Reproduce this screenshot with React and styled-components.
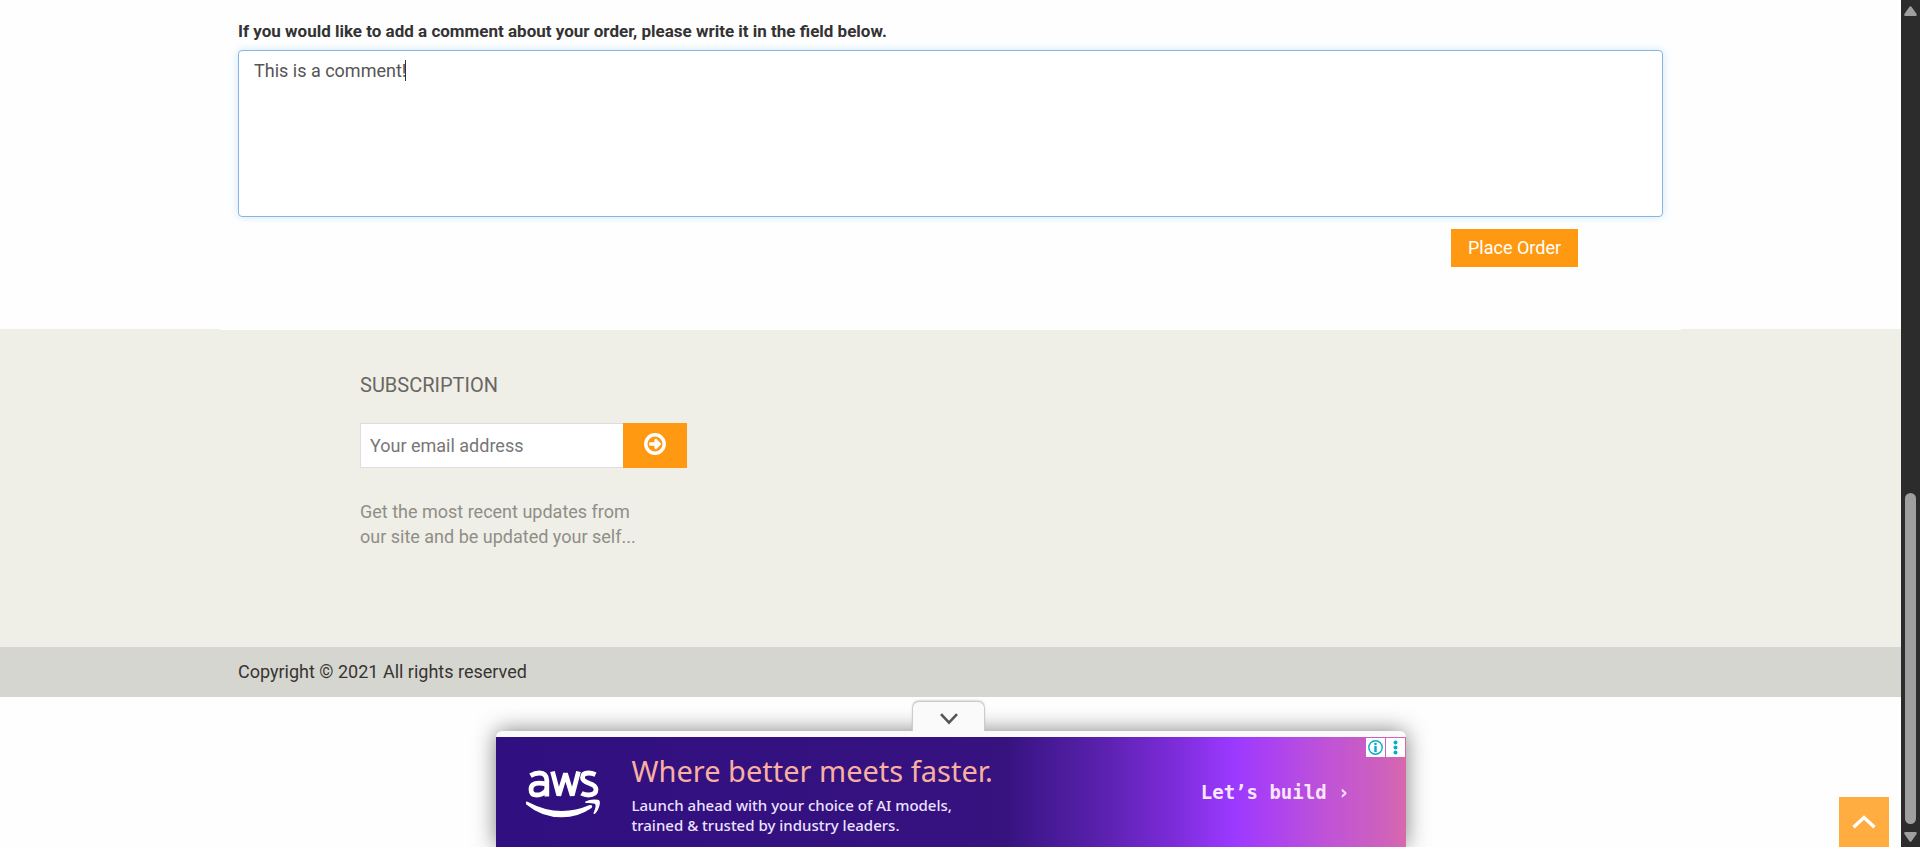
import React from "react";
import styled, { createGlobalStyle } from "styled-components";

const GlobalStyle = createGlobalStyle`
  *, *::before, *::after { box-sizing: border-box; }
  body {
    margin: 0;
    background: #fefefe;
    font-family: Roboto, "Liberation Sans", sans-serif;
    font-size: 18px;
    line-height: 25px;
    color: #333;
  }
  button, input, textarea { font: inherit; }
`;

const SCROLLBAR = "19px";
const ORANGE = "#ff9912";

const Page = styled.div`
  padding-right: ${SCROLLBAR};
`;

const Container = styled.div`
  max-width: 1461px;
  margin: 0 auto;
  padding: 0 18px;
`;

const OrderForm = styled.form`
  padding-top: 18px;
  height: 329px;
  display: flex;
  flex-direction: column;
`;

const CommentLabel = styled.label`
  font-size: 17px;
  font-weight: 700;
  line-height: 26px;
  margin-bottom: 6px;
`;

const CommentWrap = styled.div`
  position: relative;
  display: flex;
`;

const CommentBox = styled.textarea`
  flex: 1;
  height: 167px;
  padding: 7px 15px;
  border: 1px solid #85b7e4;
  border-radius: 4px;
  outline: none;
  resize: none;
  background: #fff;
  color: #555;
  box-shadow: 0 0 8px rgba(102, 175, 233, 0.3);
`;

const Caret = styled.span`
  position: absolute;
  left: 167px;
  top: 10px;
  width: 1px;
  height: 21px;
  background: #333;
`;

const Actions = styled.div`
  display: flex;
  justify-content: flex-end;
  padding: 12px 85px 0 0;
`;

const PlaceOrder = styled.button`
  width: 127px;
  height: 38px;
  padding: 0 0 1px;
  border: 0;
  background: ${ORANGE};
  color: #fff;
`;

const Footer = styled.footer`
  background: #f0efe7;
`;

const FooterTop = styled(Container)`
  border-top: 1px solid #fefefe;
  height: 318px;
  padding: 42px 18px 0 140px;
`;

const FooterTitle = styled.h2`
  margin: 0 0 24px;
  font-size: 20px;
  line-height: 27px;
  font-weight: 400;
  color: #696763;
`;

const SubscribeForm = styled.form`
  display: flex;
  margin-bottom: 31px;
`;

const EmailInput = styled.input`
  width: 263px;
  height: 45px;
  padding: 0 9px;
  border: 1px solid #ddd;
  border-right: 0;
  border-radius: 0;
  background: #fff;
  outline: none;
  &::placeholder { color: #777; opacity: 1; }
`;

const SubscribeButton = styled.button`
  display: flex;
  justify-content: center;
  width: 64px;
  height: 45px;
  padding: 10px 0 0;
  border: 0;
  background: ${ORANGE};
`;

const Note = styled.p`
  margin: 0;
  color: #8e8e88;
`;

const FooterBottom = styled.div`
  background: #d6d6d0;
`;

const Copyright = styled.p`
  margin: 0;
  padding: 12px 0 13px;
  color: #363432;
`;

const AdDock = styled.aside`
  position: fixed;
  bottom: 0;
  left: 0;
  right: ${SCROLLBAR};
  display: flex;
  flex-direction: column;
  align-items: center;
`;

const CollapseTab = styled.button`
  position: relative;
  z-index: 1;
  display: flex;
  align-items: center;
  justify-content: center;
  width: 73px;
  height: 30px;
  margin-right: 4px;
  padding: 4px 0 0;
  border: 1px solid #ccc;
  border-bottom: 0;
  border-radius: 7px 7px 0 0;
  background: #fafafa;
  box-shadow: 0 -1px 2px rgba(0, 0, 0, 0.15);
`;

const AdFrame = styled.div`
  width: 910px;
  max-width: 100%;
  padding-top: 6px;
  border-radius: 6px 6px 0 0;
  background: #fafafa;
  box-shadow: 0 0 22px rgba(0, 0, 0, 0.5);
  clip-path: inset(-40px -40px 0 -40px);
`;

const Ad = styled.div`
  position: relative;
  display: flex;
  height: 110px;
  padding: 0 56px 0 30px;
  background: linear-gradient(
    90deg,
    #300f80 0%,
    #35127f 50%,
    #36137f 56%,
    #471a97 61%,
    #5820ab 66%,
    #7a2bd6 74%,
    #9b39ff 81%,
    #a73ff5 84%,
    #bf52d8 91%,
    #cf62ba 98%,
    #d868ab 100%
  );
`;

const AwsLogo = styled.svg`
  flex: none;
  width: 76px;
  height: 84px;
`;

const AdCopy = styled.div`
  flex: 1;
  padding: 15px 0 0 30px;
  font-family: "Noto Sans", "Open Sans", sans-serif;
`;

const AdHeadline = styled.p`
  margin: 0 0 5px;
  font-size: 29px;
  line-height: 38px;
  color: #f9b0a0;
`;

const AdText = styled.p`
  margin: 0;
  font-size: 15px;
  line-height: 20px;
  font-weight: 500;
  color: #ece2ff;
`;

const AdLink = styled.a`
  padding-top: 43px;
  font-family: "DejaVu Sans Mono", monospace;
  font-size: 19px;
  font-weight: 700;
  color: #fbe6ff;
  text-decoration: none;
  white-space: nowrap;
`;

const AdChoices = styled.div`
  position: absolute;
  top: 1px;
  right: 1px;
  display: flex;
  gap: 1px;
`;

const AdChoice = styled.button`
  display: flex;
  align-items: center;
  justify-content: center;
  width: 19px;
  height: 19px;
  padding: 0;
  border: 0;
  background: #fff;
`;

const BackToTop = styled.a`
  position: fixed;
  right: 31px;
  bottom: 0;
  display: flex;
  align-items: center;
  justify-content: center;
  width: 50px;
  height: 50px;
  background: #ffad41;
`;

const ScrollTrack = styled.div`
  position: fixed;
  top: 0;
  right: 0;
  bottom: 0;
  display: flex;
  flex-direction: column;
  align-items: center;
  width: ${SCROLLBAR};
  padding: 6px 0 5px;
  background: #2c2c2c;
`;

const ScrollThumb = styled.div`
  width: 11px;
  height: 39.6%;
  margin: auto 0 8px;
  border-radius: 6px;
  background: #9f9f9f;
`;

export default function App() {
  return (
    <>
      <GlobalStyle />
      <Page>
        <Container as="main">
          <OrderForm onSubmit={(e) => e.preventDefault()}>
            <CommentLabel htmlFor="comment">
              If you would like to add a comment about your order, please write it in the field below.
            </CommentLabel>
            <CommentWrap>
              <CommentBox id="comment" defaultValue="This is a comment!" />
              <Caret aria-hidden="true" />
            </CommentWrap>
            <Actions>
              <PlaceOrder type="submit">Place Order</PlaceOrder>
            </Actions>
          </OrderForm>
        </Container>
        <Footer>
          <FooterTop>
            <FooterTitle>SUBSCRIPTION</FooterTitle>
            <SubscribeForm onSubmit={(e) => e.preventDefault()}>
              <EmailInput type="email" aria-label="Your email address" placeholder="Your email address" />
              <SubscribeButton type="submit" aria-label="Subscribe">
                <svg width="22" height="22" viewBox="0 0 22 22">
                  <circle cx="11" cy="11" r="9.2" fill="none" stroke="#fff" strokeWidth="3.4" />
                  <path d="M5.2 9.3h5.2V6.8L12 5.6l5.3 5.4-5.3 5.4-1.6-1.2v-2.5H5.2z" fill="#fff" />
                </svg>
              </SubscribeButton>
            </SubscribeForm>
            <Note>
              Get the most recent updates from
              <br />
              our site and be updated your self...
            </Note>
          </FooterTop>
          <FooterBottom>
            <Container>
              <Copyright>Copyright © 2021 All rights reserved</Copyright>
            </Container>
          </FooterBottom>
        </Footer>
      </Page>

      <AdDock aria-label="Advertisement">
        <CollapseTab type="button" aria-label="Collapse advertisement">
          <svg width="18" height="12" viewBox="0 0 18 12" fill="none" stroke="#555" strokeWidth="2.6">
            <path d="M1 1.2l8 8.4 8-8.4" />
          </svg>
        </CollapseTab>
        <AdFrame>
          <Ad>
            <AwsLogo viewBox="0 0 76 84" role="img" aria-label="aws">
              <g fill="none" stroke="#fff" strokeWidth="4.8" transform="translate(0 1)">
                <path d="M4.5 37.6Q9 35 13.5 35q7.300 0 7.300 7.500V58.500" />
                <path d="M20.800 46.200Q16.500 45.200 13 45.200q-8 0-8 6.200 0 5.600 6 5.600 6 0 9.800-5.500" />
                <path d="M26.500 33.500l6.300 24 6.700-22 6.700 22 6.300-24" strokeLinejoin="bevel" />
                <path d="M69.500 36.600Q66 35 62.500 35q-6 0-6 4.600 0 3.600 6.500 5.600 7 2.200 7 6.400 0 5.400-7.500 5.400-4 0-7-1.800" />
              </g>
              <path d="M-.5 65.500q.5-1.500 2.500-.5Q19 74 36 74q14 0 27-5.700 2.600-1 3.200.8.300 1.400-1.800 2.700Q52 80.300 36 80.300 15.500 80.300 0 67.200-1 66.300-.5 65.500z" fill="#fff" />
              <path d="M59.500 64.500q5.500-3 12.500-1.700 2.500.6 1.700 4.700-1.200 6-4.700 9.200-2 1.200-1.300-1.200 2.500-6 1.700-8-1-1.800-9-1.500-2.200-.1-.9-1.500z" fill="#fff" />
            </AwsLogo>
            <AdCopy>
              <AdHeadline>Where better meets faster.</AdHeadline>
              <AdText>
                Launch ahead with your choice of AI models,
                <br />
                trained &amp; trusted by industry leaders.
              </AdText>
            </AdCopy>
            <AdLink href="#build">Let’s build ›</AdLink>
            <AdChoices>
              <AdChoice type="button" aria-label="Ad information">
                <svg width="15" height="15" viewBox="0 0 15 15" fill="#00aecd">
                  <circle cx="7.500" cy="7.500" r="6.700" fill="none" stroke="#00aecd" strokeWidth="1.400" />
                  <circle cx="7.500" cy="4" r="1.300" />
                  <rect x="6.300" y="6" width="2.400" height="6" />
                </svg>
              </AdChoice>
              <AdChoice type="button" aria-label="Ad options">
                <svg width="15" height="15" viewBox="0 0 15 15" fill="#00aecd">
                  <circle cx="7.500" cy="2.500" r="2" />
                  <circle cx="7.500" cy="7.500" r="2" />
                  <circle cx="7.500" cy="12.500" r="2" />
                </svg>
              </AdChoice>
            </AdChoices>
          </Ad>
        </AdFrame>
      </AdDock>

      <BackToTop href="#top" aria-label="Back to top">
        <svg width="24" height="14" viewBox="0 0 24 14" fill="none" stroke="#fff" strokeWidth="3.400">
          <path d="M1.500 12.300L12 2.500l10.500 9.800" />
        </svg>
      </BackToTop>

      <ScrollTrack aria-hidden="true">
        <svg width="13" height="10" viewBox="0 0 13 10" fill="#9f9f9f">
          <path d="M5.500.8q1-1 2 0L12.600 8q.6 2-1 2H1.400q-1.600 0-1-2z" />
        </svg>
        <ScrollThumb />
        <svg width="13" height="10" viewBox="0 0 13 10" fill="#9f9f9f">
          <path d="M5.500 9.200q1 1 2 0L12.600 2q.6-2-1-2H1.400Q-.2 0 .4 2z" />
        </svg>
      </ScrollTrack>
    </>
  );
}
